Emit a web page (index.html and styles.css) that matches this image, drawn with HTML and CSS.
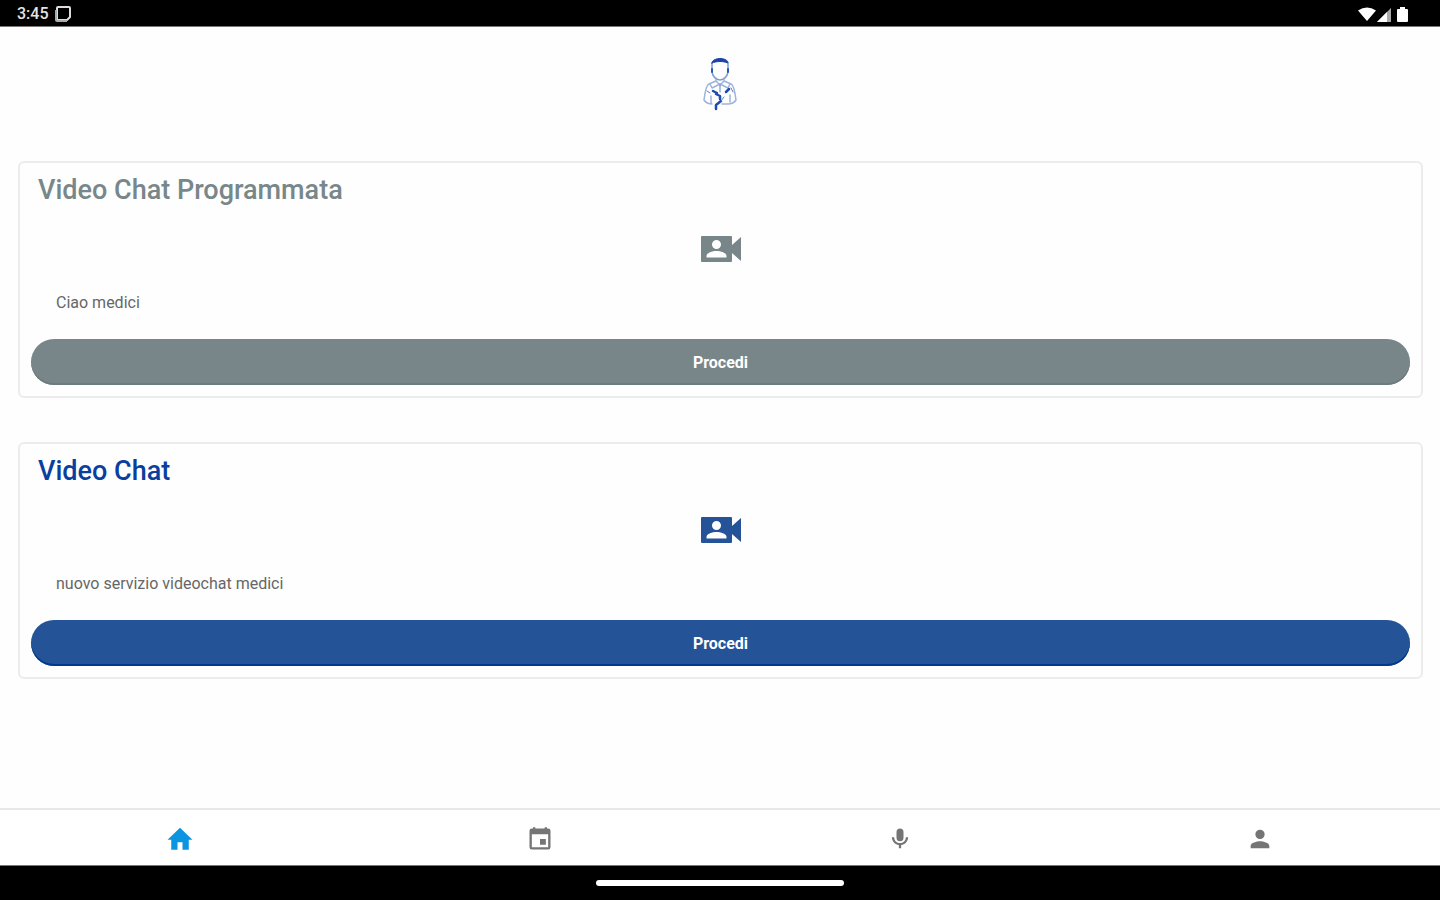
FILE: index.html
```html
<!DOCTYPE html>
<html lang="it">
<head>
<meta charset="utf-8">
<meta name="viewport" content="width=device-width, initial-scale=1">
<title>Video Chat</title>
<link rel="stylesheet" href="styles.css">
</head>
<body>
<div class="status">
  <div class="status-group">
    <span class="clock">3:45</span>
    <svg class="status-app" viewBox="0 0 16 16" aria-hidden="true"><path d="M3 1h11a1 1 0 0 1 1 1v9l-3 3H3a1 1 0 0 1-1-1V2a1 1 0 0 1 1-1z" fill="none" stroke="#ddd" stroke-width="2"/><path d="M1 4v10a1 1 0 0 0 1 1h10" fill="none" stroke="#aaa" stroke-width="2"/></svg>
  </div>
  <svg class="status-signals" viewBox="0 0 52 18" aria-hidden="true"><path d="M0 5.500Q9 -.5 18 5.500L9 16z" fill="#fff"/><path d="M19 17L33 3v14z" fill="#aaa"/><path d="M19 17L29 7v10z" fill="#fff"/><path d="M42 2h5v2h2q1 0 1 1v11q0 1-1 1h-9q-1 0-1-1V5q0-1 1-1h2z" fill="#fff"/></svg>
</div>

<header class="brand">
  <svg class="logo" viewBox="0 0 36 54" role="img" aria-label="Medico" fill="none" stroke-linecap="round" stroke-linejoin="round">
    <path d="M10 6v8c0 5 4 9 8 9s8-4 8-9V6" stroke="#7f9bcd" stroke-width="1.500"/>
    <path d="M10 6c0-6 16-6 16 0-5-2-11-2-16 0z" fill="#1a43a5" stroke="#1a43a5"/>
    <path d="M10 12v3M26 12v3" stroke="#2458bb" stroke-width="2"/>
    <path d="M14 21v3l4 4 4-4v-3M14 24l-7 3c-3 1-4 8-5 16 2 3 4 4 8 4M22 24l7 3c3 1 4 8 5 16-2 3-4 4-8 4h-6M8 27l2 4 8-4 8 4 2-4M9 39v7M28 38v7" stroke="#9db3dc" stroke-width="1.500"/>
    <path d="M11 34l4 2M14 37l4 2v3M24 35l3-3M14 52v-4l5-4" stroke="#1c4cad" stroke-width="2.500"/>
    <path d="M18 28v7M5 34l3 2M29 31l2 4M22 40l-3 4" stroke="#5c80c3"/>
  </svg>
</header>

<main class="content">
  <section class="card card-gray">
    <h2 class="title">Video Chat Programmata</h2>
    <svg class="camera" viewBox="0 0 40 26" aria-hidden="true"><path fill="currentColor" fill-rule="evenodd" d="M1 0h29q1 0 1 1v8l9-8v24l-9-8v8q0 1-1 1H1q-1 0-1-1V1q0-1 1-1zM15.500 4a4.500 4.500 0 1 0 0 9a4.500 4.500 0 1 0 0-9zM5.500 21.500h20v-1.500c0-3.500-6-5-10-5s-10 1.500-10 5z"/></svg>
    <p class="message">Ciao medici</p>
    <button class="action" type="button">Procedi</button>
  </section>
  <section class="card card-blue">
    <h2 class="title">Video Chat</h2>
    <svg class="camera" viewBox="0 0 40 26" aria-hidden="true"><path fill="currentColor" fill-rule="evenodd" d="M1 0h29q1 0 1 1v8l9-8v24l-9-8v8q0 1-1 1H1q-1 0-1-1V1q0-1 1-1zM15.500 4a4.500 4.500 0 1 0 0 9a4.500 4.500 0 1 0 0-9zM5.500 21.500h20v-1.500c0-3.500-6-5-10-5s-10 1.500-10 5z"/></svg>
    <p class="message">nuovo servizio videochat medici</p>
    <button class="action" type="button">Procedi</button>
  </section>
</main>

<nav class="tabs">
  <a class="tab tab-active" href="#home" aria-label="Home"><svg class="tab-icon" viewBox="0 0 24 24"><path d="M10 20.500v-6h4v6h5v-8h3L12 3 2 12.500h3v8z"/></svg></a>
  <a class="tab" href="#calendario" aria-label="Calendario"><svg class="tab-icon" viewBox="0 0 24 24"><path d="M17 12h-5v5h5zM16 2v1H8V2H6v1H5a2 2 0 0 0-2 2v14a2 2 0 0 0 2 2h14a2 2 0 0 0 2-2V5a2 2 0 0 0-2-2h-1V2zm3 17H5V8h14z"/></svg></a>
  <a class="tab" href="#voce" aria-label="Voce"><svg class="tab-icon" viewBox="0 0 24 24"><path d="M12 14a3 3 0 0 0 3-3V6a3 3 0 0 0-6 0v5a3 3 0 0 0 3 3zm5-3.500c0 3-2.500 5-5 5s-5-2-5-5H5c0 3.500 2.700 6.200 6 6.700V20h2v-2.800c3.300-.5 6-3.200 6-6.700z"/></svg></a>
  <a class="tab" href="#profilo" aria-label="Profilo"><svg class="tab-icon" viewBox="0 0 24 24"><path d="M12 12a4 4 0 1 0 0-8 4 4 0 0 0 0 8zm0 2c-2.700 0-8 1.300-8 4v2h16v-2c0-2.700-5.300-4-8-4z"/></svg></a>
</nav>
<div class="system-bar"><div class="handle"></div></div>
</body>
</html>
```
FILE: styles.css
```css
* {
  box-sizing: border-box;
}

body {
  margin: 0;
  min-height: 100vh;
  display: flex;
  flex-direction: column;
  background: #fefefe;
  font-family: Roboto, "Liberation Sans", sans-serif;
}

.status {
  height: 27px;
  padding: 1px 30px 0 17px;
  display: flex;
  align-items: center;
  justify-content: space-between;
  background: #000;
  border-bottom: 1px solid #777;
}

.status-group {
  display: flex;
  align-items: center;
  gap: 6px;
}

.clock {
  color: #e4e4e4;
  font-size: 16px;
  font-weight: 500;
  line-height: 24px;
}

.status-app {
  width: 16px;
  height: 16px;
}

.status-signals {
  width: 52px;
  height: 18px;
}

.brand {
  display: flex;
  justify-content: center;
  padding: 30px 0 50px;
}

.logo {
  width: 36px;
  height: 54px;
}

.content {
  flex: 1;
  display: flex;
  flex-direction: column;
  gap: 44px;
  padding: 0 17px 0 18px;
}

.card {
  display: flex;
  flex-direction: column;
  padding: 11px;
  border: 2px solid #ececec;
  border-radius: 6px;
}

.card-gray {
  --title: #78878a;
  --fill: #788689;
  --edge: #6c7b7b;
}

.card-blue {
  --title: #0a3fa0;
  --fill: #245398;
  --edge: #003a8c;
}

.title {
  margin: 0;
  padding: 0 7px;
  color: var(--title);
  font-size: 27px;
  font-weight: 500;
  line-height: 32px;
}

.camera {
  width: 40px;
  height: 26px;
  margin: 30px 0 29px;
  align-self: center;
  color: var(--fill);
}

.message {
  margin: 0;
  padding: 0 25px;
  color: #666;
  font-size: 16px;
  line-height: 24px;
}

.action {
  height: 46px;
  margin-top: 24px;
  padding: 0;
  border: 0;
  border-radius: 23px;
  background: var(--fill);
  box-shadow: inset 0 -2px 0 var(--edge);
  color: #fff;
  font-family: inherit;
  font-size: 16px;
  font-weight: 700;
}

.tabs {
  display: flex;
  height: 57px;
  padding-top: 2px;
  border-top: 2px solid #e8e8e8;
  background: #fff;
}

.tab {
  flex: 1;
  display: flex;
  align-items: center;
  justify-content: center;
  color: #757575;
}

.tab-active {
  color: #0b95e0;
}

.tab-icon {
  width: 28px;
  height: 28px;
  fill: currentColor;
}

.tab-active .tab-icon {
  width: 30px;
  height: 30px;
}

.system-bar {
  height: 35px;
  display: flex;
  align-items: center;
  justify-content: center;
  background: #000;
  border-top: 1px solid #777;
}

.handle {
  width: 248px;
  height: 6px;
  border-radius: 3px;
  background: #fff;
}
```
